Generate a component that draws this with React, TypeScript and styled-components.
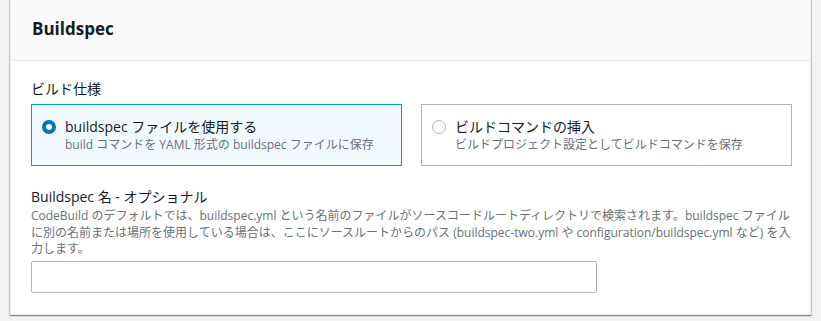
import React from "react";
import styled, { createGlobalStyle } from "styled-components";

const Global = createGlobalStyle`
  html, body { margin: 0; padding: 0; background: #f2f3f3; }
  body { font-family: "Open Sans", "Noto Sans CJK JP", sans-serif; color: #16191f; }
`;

const Page = styled.div`
  padding: 0 10px 8px 10px;
  margin-top: -4px;
`;

const Card = styled.section`
  background: #fff;
  border: 1px solid #eaeded;
  box-shadow: 0 1px 1px 0 rgba(0, 28, 36, 0.3), 1px 1px 1px 0 rgba(0, 28, 36, 0.15), -1px 1px 1px 0 rgba(0, 28, 36, 0.15);
`;

const Header = styled.header`
  background: #fafafa;
  border-bottom: 1px solid #eaeded;
  padding: 0 20px 0 21px;
  box-sizing: border-box;
  height: 64px;
  display: flex;
  align-items: center;
`;

const Title = styled.h2`
  margin: 0;
  font-size: 17px;
  font-weight: 700;
  line-height: 20px;
`;

const Body = styled.div`
  padding: 18px 20px 21px 20px;
  display: flex;
  flex-direction: column;
`;

const Label = styled.div`
  font-size: 14px;
  line-height: 20px;
  color: #16191f;
`;

const Tiles = styled.div`
  display: grid;
  grid-template-columns: 371px 371px;
  column-gap: 19px;
  margin-top: 5px;
`;

const Tile = styled.div<{ $active?: boolean }>`
  height: 62px;
  box-sizing: border-box;
  border: 1px solid ${(p) => (p.$active ? "#00a1c9" : "#aab7b8")};
  background: ${(p) => (p.$active ? "#f1faff" : "#fff")};
  display: flex;
  align-items: flex-start;
  padding: 12px 16px 0 10px;
  gap: 9px;
`;

const Radio = styled.span<{ $active?: boolean }>`
  width: 14px;
  height: 14px;
  border-radius: 50%;
  box-sizing: border-box;
  margin-top: 3px;
  flex: none;
  border: ${(p) => (p.$active ? "4px solid #0073bb" : "1px solid #aab7b8")};
  background: #fff;
`;

const TileText = styled.div`
  display: flex;
  flex-direction: column;
`;

const TileTitle = styled.div`
  font-size: 14px;
  line-height: 20px;
  color: #16191f;
`;

const TileDesc = styled.div`
  font-size: 12px;
  line-height: 16px;
  color: #687078;
`;

const Field = styled.div`
  margin-top: 20px;
  display: flex;
  flex-direction: column;
`;

const FieldLabel = styled.div`
  font-size: 14px;
  line-height: 22px;
  color: #16191f;
`;

const FieldDesc = styled.div`
  font-size: 12px;
  line-height: 16.5px;
  color: #687078;
  width: 760px;
`;

const Input = styled.input`
  margin-top: 3px;
  width: 566px;
  height: 32px;
  box-sizing: border-box;
  border: 1px solid #aab7b8;
  border-radius: 2px;
  background: #fff;
  font-size: 14px;
  padding: 4px 10px;
  outline: none;
`;

export default function App() {
  return (
    <>
      <Global />
      <Page>
        <Card>
          <Header>
            <Title>Buildspec</Title>
          </Header>
          <Body>
            <Label>ビルド仕様</Label>
            <Tiles>
              <Tile $active>
                <Radio $active />
                <TileText>
                  <TileTitle>buildspec ファイルを使用する</TileTitle>
                  <TileDesc>build コマンドを YAML 形式の buildspec ファイルに保存</TileDesc>
                </TileText>
              </Tile>
              <Tile>
                <Radio />
                <TileText>
                  <TileTitle>ビルドコマンドの挿入</TileTitle>
                  <TileDesc>ビルドプロジェクト設定としてビルドコマンドを保存</TileDesc>
                </TileText>
              </Tile>
            </Tiles>
            <Field>
              <FieldLabel>Buildspec 名 - オプショナル</FieldLabel>
              <FieldDesc>
                CodeBuild のデフォルトでは、buildspec.yml という名前のファイルがソースコードルートディレクトリで検索されます。buildspec ファイルに別の名前または場所を使用している場合は、ここにソースルートからのパス (buildspec-two.yml や configuration/buildspec.yml など) を入力します。
              </FieldDesc>
              <Input />
            </Field>
          </Body>
        </Card>
      </Page>
    </>
  );
}
